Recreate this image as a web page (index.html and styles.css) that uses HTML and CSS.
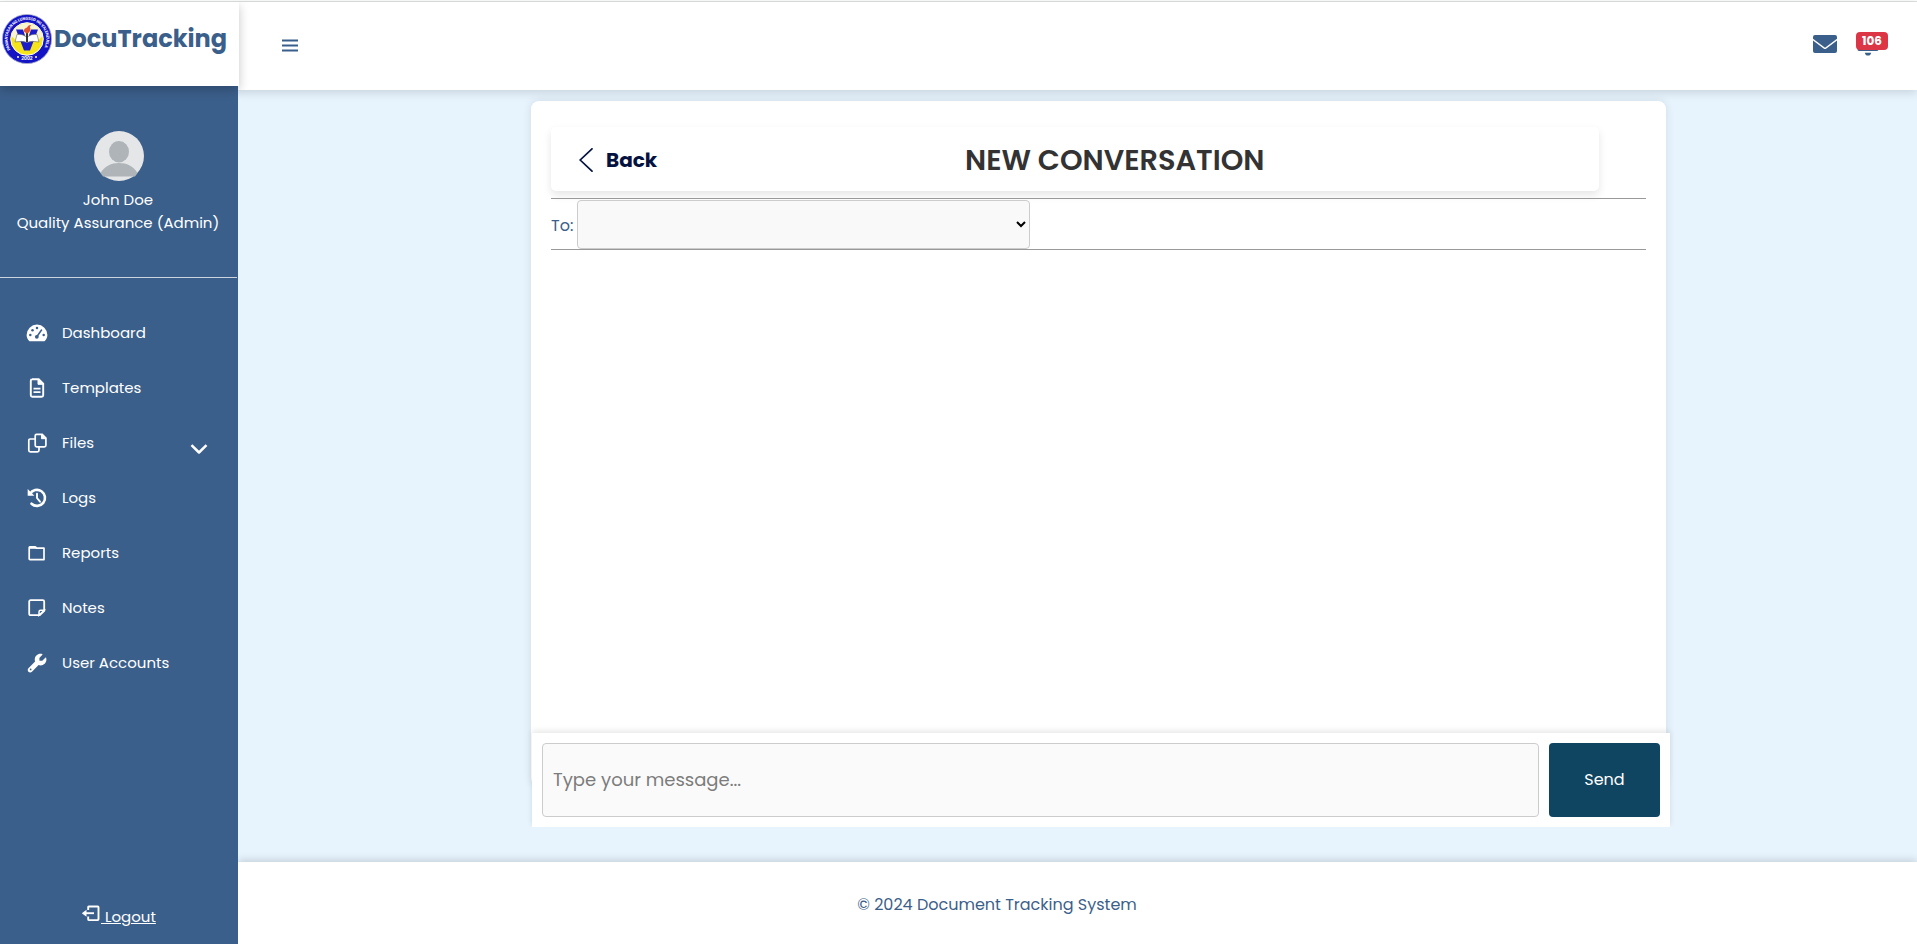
FILE: index.html
```html
<!DOCTYPE html>
<html lang="en">
<head>
<meta charset="utf-8">
<title>DocuTracking</title>
<link rel="stylesheet" href="styles.css">
</head>
<body>
<div class="app">
  <aside class="sidebar">
    <div class="brand">
      <svg class="logo" viewBox="0 0 50 50">
        <defs><path id="ring" d="M8.600 35.500A19.400 19.400 0 1 1 41.400 35.500"/></defs>
        <circle cx="25" cy="25" r="24.600" fill="#1414c4" stroke="#aeb4c8" stroke-width=".8"/>
        <circle cx="25" cy="25" r="16.300" fill="#f7e51c" stroke="#fff" stroke-width="1"/>
        <path d="M9.500 22a15.800 15.800 0 0 1 31 0l-4 4h-23z" fill="#f8f5d0"/>
        <path d="M14 15.500h7l4 12 4-12h7L28 36.500h-6z" fill="#1c1cc8"/>
        <path d="M15 20.500q5-1 10 2.500 5-3.500 10-2.500l2 7.500q-7-1.500-12 .5-5-2-12-.5z" fill="#fff" stroke="#666" stroke-width=".6"/>
        <path d="M25 16v12" stroke="#222" stroke-width="1.800"/>
        <path d="M22 17.500q-.5-3 3-4 1-3 4-2.500-2 2-.5 4-.5 4-4 4.500z" fill="#e4522f"/>
        <text class="seal"><textPath href="#ring">PAMANTASAN NG LUNGSOD NG VALENZUELA</textPath></text>
        <text class="seal seal-year" x="25" y="46.300" text-anchor="middle">2002</text>
        <circle cx="16" cy="43" r="1" fill="#fff"/><circle cx="34" cy="43" r="1" fill="#fff"/>
      </svg>
      <span class="brand-name">DocuTracking</span>
    </div>
    <div class="profile">
      <svg class="avatar" viewBox="0 0 50 50">
        <circle cx="25" cy="25" r="25" fill="#e4e6e8"/>
        <ellipse cx="25" cy="20.700" rx="10" ry="10.700" fill="#aeb4b8"/>
        <path d="M6.500 42C11 35 17 32 25 32s14 3 18.500 10l-2.500 3.500H9z" fill="#aeb4b8"/>
      </svg>
      <span class="user-name">John Doe</span>
      <span class="user-role">Quality Assurance (Admin)</span>
    </div>
    <nav class="menu">
      <a class="item"><svg viewBox="0 0 22 22"><path d="M3.500 19.300C1.800 17.500.6 15.500.6 13a10.400 10.400 0 0 1 20.800 0c0 2.500-1.200 4.500-2.900 6.300z" fill="#fff"/><g fill="#3b5f8b"><circle cx="4.300" cy="13" r="1.250"/><circle cx="6.500" cy="8.200" r="1.250"/><circle cx="11" cy="6.100" r="1.250"/><circle cx="17.700" cy="13" r="1.250"/><circle cx="10.800" cy="14.800" r="1.900"/></g><path d="M11 14.500l4.500-6.500" stroke="#3b5f8b" stroke-width="1.500" stroke-linecap="round"/></svg><span>Dashboard</span></a>
      <a class="item"><svg viewBox="0 0 22 22" fill="none" stroke="#fff" stroke-width="1.900"><path d="M6 2.200h6.700l4.500 4.500v11.600q0 1.500-1.500 1.500H6.300q-1.500 0-1.500-1.500V3.700q0-1.500 1.500-1.500z"/><path d="M12 2v5.300h5.500z" fill="#fff" stroke-width="1"/><path d="M7.500 11.700h7M7.500 15.200h7" stroke-width="1.700"/></svg><span>Templates</span></a>
      <a class="item"><svg viewBox="0 0 22 22" fill="none" stroke="#fff" stroke-width="1.700"><path d="M10.500 2.300h5.700l3.700 3.700v7.300q0 1.500-1.500 1.500h-7.700q-1.500 0-1.500-1.500V3.800q0-1.500 1.300-1.500z"/><path d="M15.500 2.300v4.400h4.400z" fill="#fff" stroke-width="1"/><path d="M9 7H4.300Q2.800 7 2.800 8.500v9.800q0 1.500 1.500 1.500h7.200q1.500 0 1.500-1.500v-3.200"/></svg><span>Files</span><svg class="chevron" viewBox="0 0 18 18" fill="none" stroke="#fff" stroke-width="2.500"><path d="M1.500 5.200 9 12.500l7.500-7.300" stroke-linejoin="round"/></svg></a>
      <a class="item"><svg viewBox="0 0 22 22" fill="none" stroke="#fff" stroke-width="2.600"><path d="M4 7a8 8 0 1 1 1.500 9.700" stroke-linecap="round"/><path d="M1.700 2v6.700h6.700z" fill="#fff" stroke="none"/><path d="M11 6.700V11l3 3.700" stroke-width="1.900" stroke-linecap="round"/></svg><span>Logs</span></a>
      <a class="item"><svg viewBox="0 0 22 22" fill="none" stroke="#fff" stroke-width="1.700"><path d="M4 17.600h14V6.200h-7.500L9 4.800H4q-.8 0-.8.800V17q0 .6.800.6z" stroke-linejoin="round"/><path d="M3 5.700h7.500" stroke-width="2.200"/></svg><span>Reports</span></a>
      <a class="item"><svg viewBox="0 0 22 22" fill="none" stroke="#fff" stroke-width="1.800"><path d="M4.700 3.200h12q1.500 0 1.500 1.400v9.200L13.800 18.200H4.700q-1.500 0-1.500-1.500V4.600q0-1.400 1.500-1.400z"/><path d="M13 18.200v-3.300q0-1.700 1.700-1.700h3.600z" stroke-width="1.500"/></svg><span>Notes</span></a>
      <a class="item"><svg viewBox="0 0 512 512"><path d="M352 320c88.400 0 160-71.600 160-160c0-15.300-2.200-30.100-6.200-44.200c-3.100-10.800-16.400-13.200-24.300-5.300l-76.800 76.800c-3 3-7.100 4.700-11.300 4.700H336c-8.800 0-16-7.200-16-16V118.600c0-4.200 1.700-8.300 4.700-11.300l76.800-76.800c7.900-7.900 5.400-21.200-5.300-24.300C382.100 2.200 367.300 0 352 0C263.600 0 192 71.600 192 160c0 19.100 3.400 37.500 9.500 54.500L19.900 396.100C7.200 408.800 0 426.100 0 444.100C0 481.600 30.400 512 67.900 512c18 0 35.300-7.200 48-19.900L297.500 310.500c17 6.200 35.400 9.500 54.500 9.500zM80 408a24 24 0 1 1 0 48 24 24 0 1 1 0-48z" fill="#fff" transform="translate(40 40) scale(.85)"/></svg><span>User Accounts</span></a>
    </nav>
    <a class="logout"><svg viewBox="0 0 20 18" fill="none" stroke="#fff" stroke-width="1.900"><path d="M7.200 5V2q0-.5.500-.5h9q.8 0 .8.800v12q0 .8-.8.800h-9q-.5 0-.5-.5v-3"/><path d="M4 8.200h9"/><path d="M.8 8.200 5.500 4.700v7z" fill="#fff" stroke="none"/></svg><span class="logout-text">&nbsp;Logout</span></a>
  </aside>
  <div class="main">
    <header class="topbar">
      <svg class="burger" viewBox="0 0 16 14"><path d="M0 1.500h16M0 6.500h16M0 11.500h16" stroke="#3b5f8b" stroke-width="2.200"/></svg>
      <div class="actions">
        <svg class="mail" viewBox="0 0 24 18"><path d="M2 0h20q2 0 2 2v1.700l-12 9-12-9V2Q0 0 2 0z" fill="#3b5f8b"/><path d="M0 5.500l11 8.200q1 .7 2 0l11-8.200V16q0 2-2 2H2q-2 0-2-2z" fill="#3b5f8b"/></svg>
        <div class="bell">
          <svg viewBox="0 0 22 24"><path d="M11 1a7 7 0 0 1 7 7q0 5 3.300 8.500.5 2.500-1.500 2.500H2.200q-2 0-1.500-2.500Q4 13 4 8a7 7 0 0 1 7-7zM7.800 20.700h6.400Q13.500 23.600 11 23.600t-3.200-2.900z" fill="#3b5f8b"/></svg>
          <span class="badge">106</span>
        </div>
      </div>
    </header>
    <main class="content">
      <section class="card">
        <div class="card-head">
          <a class="back"><svg viewBox="0 0 14 24" fill="none" stroke="#03123f" stroke-width="1.700"><path d="M13 .8 1.200 12 13 23.200" stroke-linecap="round"/></svg><span>Back</span></a>
          <h2 class="title">NEW CONVERSATION</h2>
        </div>
        <div class="recipient">
          <label for="to">To:</label>
          <select id="to"><option></option></select>
        </div>
      </section>
      <form class="composer">
        <input class="message" type="text" placeholder="Type your message...">
        <button class="send" type="button">Send</button>
      </form>
    </main>
    <footer class="footer"><span>© 2024 Document Tracking System</span></footer>
  </div>
</div>
</body>
</html>
```
FILE: styles.css
```css
* { box-sizing: border-box; }
body { margin: 0; background: #fff; color: #3b5f8b; font-family: Poppins, Inter, sans-serif; font-size: 15px; overflow: hidden; }
.app { display: flex; height: 944px; padding-top: 2px; background: linear-gradient(#fff 1px, #dfe3e3 1px 2px, #fff 2px); }
.sidebar { width: 238px; flex: none; display: flex; flex-direction: column; background: #3b5f8b; color: #fff; position: relative; z-index: 2; }
.brand { width: 239px; height: 84px; flex: none; display: flex; align-items: flex-start; padding: 12px 0 0 2px; background: #fff; box-shadow: 0 4px 10px rgba(0,0,0,.22); }
.logo { width: 50px; height: 50px; flex: none; }
.seal { font-family: Roboto, sans-serif; font-size: 4px; letter-spacing: -.15px; font-weight: 700; fill: #fff; }
.seal-year { font-size: 5px; letter-spacing: 0; }
.brand-name { margin-left: 2px; line-height: 50px; font-size: 24px; font-weight: 700; color: #3b5f8b; white-space: nowrap; }
.profile { height: 192px; flex: none; display: flex; flex-direction: column; align-items: center; width: 237px; padding-top: 45px; border-bottom: 1px solid #cbd3dc; line-height: 23px; white-space: nowrap; }
.avatar { width: 50px; height: 50px; margin-bottom: 7px; }
.user-name, .user-role { padding-right: 1px; }
.menu { display: flex; flex-direction: column; padding-top: 27px; }
.item { display: flex; align-items: center; height: 55px; padding-left: 26px; white-space: nowrap; }
.item > svg { width: 22px; height: 22px; flex: none; }
.item > span { margin-left: 14px; }
.item > .chevron { width: 18px; height: 18px; margin: 13px 30px 0 auto; }
.logout { display: flex; align-items: flex-end; margin: auto 0 16px 81px; height: 24px; }
.logout svg { width: 20px; height: 18px; margin-bottom: 5px; }
.logout-text { text-decoration: underline; line-height: 22px; }
.main { flex: 1; min-width: 0; display: flex; flex-direction: column; background: #e7f4fd; }
.topbar { height: 88px; flex: none; display: flex; align-items: flex-start; justify-content: space-between; background: #fff; padding: 0 29px 0 44px; box-shadow: 0 2px 10px rgba(0,0,0,.15); position: relative; z-index: 1; }
.burger { width: 16px; height: 14px; margin-top: 37px; }
.actions { display: flex; gap: 20px; margin-top: 30px; }
.mail { width: 24px; height: 18px; margin-top: 3px; }
.bell { position: relative; width: 31px; height: 24px; }
.bell svg { width: 22px; height: 24px; }
.badge { position: absolute; left: -1px; top: 0; width: 32px; height: 18px; border-radius: 4px; background: #dc3545; color: #fff; font-size: 12px; font-weight: 700; line-height: 18px; text-align: center; }
.content { flex: 1; display: flex; flex-direction: column; padding: 11px 0 0 293px; }
.card { width: 1135px; height: 685px; flex: none; padding: 26px 20px 20px; border-radius: 8px; background: #fff; box-shadow: 0 0 10px rgba(0,0,0,.1); }
.card-head { display: flex; align-items: center; width: 1048px; height: 64px; padding: 2px 0 0 28px; border-radius: 5px; background: #fff; box-shadow: 0 4px 8px rgba(0,0,0,.1); }
.back { display: flex; align-items: center; gap: 13px; width: 386px; color: #03123f; font-size: 20px; font-weight: 700; }
.back svg { width: 14px; height: 24px; }
.title { margin: 0; font-size: 28.800px; font-weight: 600; color: #333; line-height: 42px; white-space: nowrap; }
.recipient { display: flex; align-items: center; gap: 3px; height: 52px; margin-top: 7px; border-top: 1px solid #999; border-bottom: 1px solid #999; font-size: 16px; }
.recipient label { width: 23px; padding-top: 2px; white-space: nowrap; }
.recipient select { width: 453px; height: 49px; padding-right: 1px; border: 1px solid #ccc; border-radius: 4px; background: #f9f9f9; font: inherit; color: #000; }
.composer { display: flex; gap: 10px; width: 1138px; height: 94px; flex: none; margin: -53px 0 0 1px; padding: 10px; background: #fff; box-shadow: 0 -2px 6px rgba(0,0,0,.1); clip-path: inset(-10px -10px 0 -10px); position: relative; }
.message { flex: 1; height: 74px; padding: 0 10px 2px; border: 1px solid #ccc; border-radius: 4px; background: #fafafa; font-family: inherit; font-size: 18px; }
.message::placeholder { color: #7c7c7c; }
.send { width: 111px; height: 74px; padding: 0 6px 2px; border: 0; border-radius: 4px; background: #104562; color: #fff; font-family: inherit; font-size: 16px; }
.footer { height: 82px; flex: none; display: flex; align-items: flex-start; justify-content: center; padding: 31px 161px 0 0; background: #fff; box-shadow: 0 -2px 8px rgba(0,0,0,.15); font-size: 16px; line-height: 24px; position: relative; }
```
